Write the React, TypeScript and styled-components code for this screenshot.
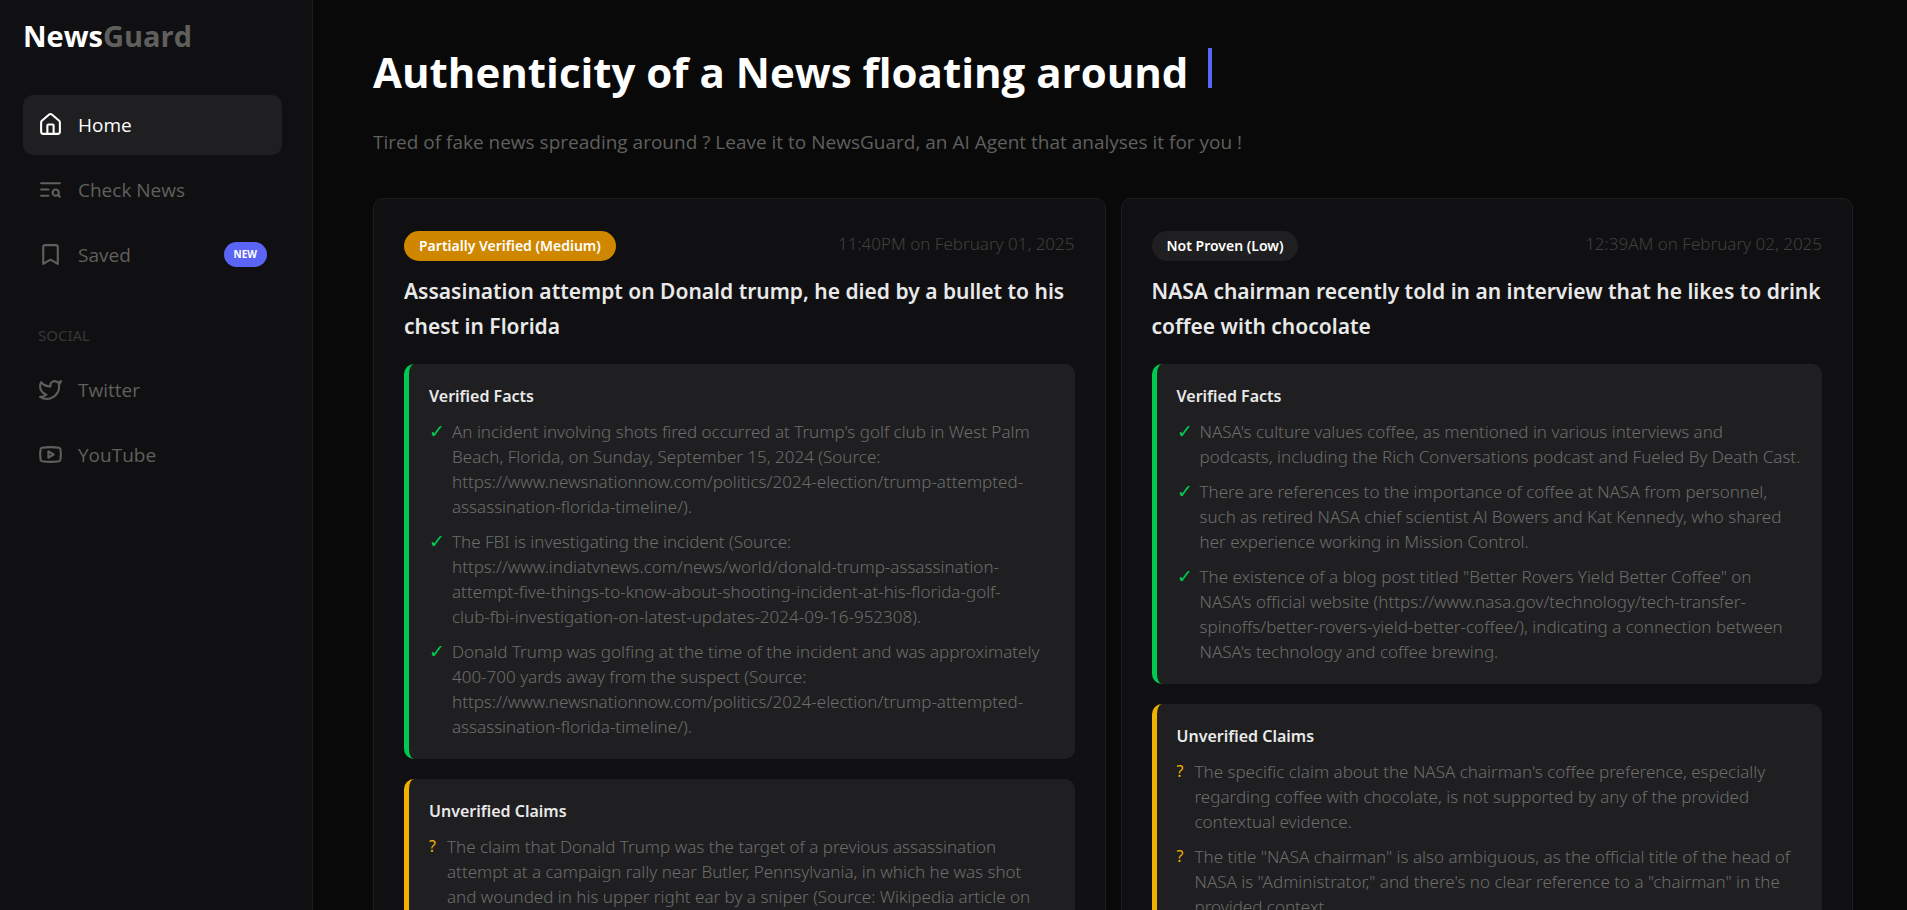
import React, { type ReactNode } from 'react';
import styled, { createGlobalStyle } from 'styled-components';
import { House, Bookmark, Twitter, Youtube } from 'lucide-react';

const color = {
  page: '#090909',
  panel: '#101012',
  raised: '#1f1f21',
  line: '#1d1d20',
  muted: '#5f605d',
  body: '#6c6d6a',
  faint: '#363734',
  stamp: '#3f403d',
  text: '#e9e9e9',
  accent: '#5b65f5',
};

const sans = '"Open Sans", "Noto Sans", sans-serif';
const compact = '"Noto Sans", "Open Sans", sans-serif';

const GlobalStyle = createGlobalStyle`
  * { box-sizing: border-box; margin: 0; padding: 0; }
  body {
    background: ${color.page};
    color: #fff;
    font-family: ${sans};
  }
`;

const Shell = styled.div`
  display: flex;
  height: 100vh;
`;

const Sidebar = styled.aside`
  flex: none;
  width: 313px;
  padding: 16px 30px 0 23px;
  background: ${color.panel};
  border-right: 1px solid ${color.line};
`;

const Logo = styled.h2`
  margin-bottom: 39px;
  font-size: 29px;
  line-height: 40px;
  font-weight: 700;

  span { color: ${color.muted}; }
`;

const NavList = styled.ul`
  display: flex;
  flex-direction: column;
  gap: 5px;
  list-style: none;
`;

const NavLink = styled.a<{ $active?: boolean }>`
  display: flex;
  align-items: center;
  gap: 15px;
  height: 60px;
  padding: 0 15px 2px;
  border-radius: 10px;
  background: ${(p) => (p.$active ? color.raised : 'transparent')};
  color: ${(p) => (p.$active ? '#fff' : color.muted)};
  font-size: 19px;
  line-height: 30px;
  text-decoration: none;
`;

const NavLabel = styled.span`
  padding-top: 2px;
`;

const NewBadge = styled.span`
  margin-left: auto;
  padding: 0 10px;
  border-radius: 13px;
  background: ${color.accent};
  color: #fff;
  font-size: 10px;
  line-height: 25px;
  font-weight: 700;
`;

const GroupTitle = styled.h3`
  margin: 38px 0 12px;
  padding-left: 15px;
  color: ${color.faint};
  font: 400 15px/25px ${compact};
`;

const Main = styled.main`
  flex: 1;
  min-width: 0;
  padding: 46px 54px 30px 60px;
  overflow-y: auto;
  scrollbar-width: none;
`;

const Headline = styled.h1`
  font-size: 42px;
  line-height: 52px;
  font-weight: 700;
`;

const Caret = styled.span`
  display: inline-block;
  width: 4px;
  height: 40px;
  margin-left: 20px;
  background: ${color.accent};
`;

const Tagline = styled.p`
  margin: 29px 0 41px;
  color: ${color.muted};
  font-size: 19px;
  line-height: 30px;
`;

const Feed = styled.div`
  display: grid;
  grid-template-columns: repeat(2, minmax(0, 1fr));
  gap: 15px;
  align-items: start;
`;

const Card = styled.article`
  padding: 32px 30px 30px;
  background: ${color.panel};
  border: 1px solid ${color.line};
  border-radius: 10px;
`;

const CardTop = styled.header`
  display: flex;
  align-items: flex-start;
  justify-content: space-between;
  margin-bottom: 13px;
`;

const Verdict = styled.span<{ $tone: string }>`
  padding: 0 15px;
  border-radius: 15px;
  background: ${(p) => p.$tone};
  font: 600 14px/30px ${compact};
`;

const Stamp = styled.time`
  color: ${color.stamp};
  font: 300 17px/25px ${compact};
`;

const CardTitle = styled.h2`
  margin-bottom: 20px;
  color: ${color.text};
  font: 600 21px/35px ${compact};
`;

const Section = styled.section<{ $edge: string }>`
  padding: 20px;
  border-left: 5px solid ${(p) => p.$edge};
  border-radius: 10px;
  background: ${color.raised};

  & + & { margin-top: 20px; }
`;

const SectionTitle = styled.h3`
  margin-bottom: 10px;
  color: ${color.text};
  font: 600 16px/25px ${compact};
`;

const Points = styled.ul`
  display: flex;
  flex-direction: column;
  gap: 10px;
  list-style: none;
`;

const Point = styled.li`
  display: flex;
  gap: 10px;
  color: ${color.body};
  font: 300 17px/25px ${compact};
  white-space: pre-line;
`;

const Mark = styled.span<{ $tone: string; $wide?: boolean }>`
  flex: none;
  width: ${(p) => (p.$wide ? 13 : 8)}px;
  color: ${(p) => p.$tone};
  font-size: ${(p) => (p.$wide ? 19 : 16)}px;
  font-weight: ${(p) => (p.$wide ? 300 : 400)};
`;

type Kind = 'facts' | 'claims';

const kinds = {
  facts: { title: 'Verified Facts', mark: '✓', tone: '#00c950' },
  claims: { title: 'Unverified Claims', mark: '?', tone: '#f0b100' },
};

interface Story {
  verdict: string;
  tone: string;
  time: string;
  title: string;
  facts: string[];
  claims: string[];
}

const stories: Story[] = [
  {
    verdict: 'Partially Verified (Medium)',
    tone: '#d08700',
    time: '11:40PM on February 01, 2025',
    title: 'Assasination attempt on Donald trump, he died by a bullet to his chest in Florida',
    facts: [
      "An incident involving shots fired occurred at Trump's golf club in West Palm Beach, Florida, on Sunday, September 15, 2024 (Source: https://www.newsnationnow.com/politics/2024-election/trump-attempted-assassination-florida-timeline/).",
      'The FBI is investigating the incident (Source: https://www.indiatvnews.com/news/world/donald-trump-assassination-attempt-five-things-to-know-about-shooting-incident-at-his-florida-golf-\nclub-fbi-investigation-on-latest-updates-2024-09-16-952308).',
      'Donald Trump was golfing at the time of the incident and was approximately 400-700 yards away from the suspect (Source: https://www.newsnationnow.com/politics/2024-election/trump-attempted-assassination-florida-timeline/).',
    ],
    claims: [
      'The claim that Donald Trump was the target of a previous assassination attempt at a campaign rally near Butler, Pennsylvania, in which he was shot and wounded in his upper right ear by a sniper (Source: Wikipedia article on',
    ],
  },
  {
    verdict: 'Not Proven (Low)',
    tone: color.raised,
    time: '12:39AM on February 02, 2025',
    title: 'NASA chairman recently told in an interview that he likes to drink coffee with chocolate',
    facts: [
      "NASA's culture values coffee, as mentioned in various interviews and\npodcasts, including the Rich Conversations podcast and Fueled By Death Cast.",
      'There are references to the importance of coffee at NASA from personnel, such as retired NASA chief scientist Al Bowers and Kat Kennedy, who shared her experience working in Mission Control.',
      'The existence of a blog post titled "Better Rovers Yield Better Coffee" on NASA\'s official website (https://www.nasa.gov/technology/tech-transfer-spinoffs/better-rovers-yield-better-coffee/), indicating a connection between NASA\'s technology and coffee brewing.',
    ],
    claims: [
      "The specific claim about the NASA chairman's coffee preference, especially regarding coffee with chocolate, is not supported by any of the provided contextual evidence.",
      'The title "NASA chairman" is also ambiguous, as the official title of the head of NASA is "Administrator," and there\'s no clear reference to a "chairman" in the provided context.',
    ],
  },
];

function SearchTextIcon() {
  return (
    <svg width="25" height="25" viewBox="0 0 24 24" fill="none" stroke="currentColor" strokeWidth="2" strokeLinecap="round" strokeLinejoin="round" aria-hidden>
      <path d="M21 6H3M10 12H3M10 18H3" />
      <circle cx="17" cy="15" r="3" />
      <path d="m21 19-1.9-1.9" />
    </svg>
  );
}

function NavItem({ icon, label, active, isNew }: { icon: ReactNode; label: string; active?: boolean; isNew?: boolean }) {
  return (
    <li>
      <NavLink href="#" $active={active}>
        {icon}
        <NavLabel>{label}</NavLabel>
        {isNew && <NewBadge>NEW</NewBadge>}
      </NavLink>
    </li>
  );
}

function Findings({ kind, items }: { kind: Kind; items: string[] }) {
  const { title, mark, tone } = kinds[kind];
  return (
    <Section $edge={tone}>
      <SectionTitle>{title}</SectionTitle>
      <Points>
        {items.map((item) => (
          <Point key={item}>
            <Mark $tone={tone} $wide={kind === 'facts'}>{mark}</Mark>
            <span>{item}</span>
          </Point>
        ))}
      </Points>
    </Section>
  );
}

export default function App() {
  return (
    <>
      <GlobalStyle />
      <Shell>
        <Sidebar>
          <Logo>News<span>Guard</span></Logo>
          <nav>
            <NavList>
              <NavItem icon={<House size={25} />} label="Home" active />
              <NavItem icon={<SearchTextIcon />} label="Check News" />
              <NavItem icon={<Bookmark size={25} />} label="Saved" isNew />
            </NavList>
            <GroupTitle>SOCIAL</GroupTitle>
            <NavList>
              <NavItem icon={<Twitter size={25} />} label="Twitter" />
              <NavItem icon={<Youtube size={25} />} label="YouTube" />
            </NavList>
          </nav>
        </Sidebar>
        <Main>
          <Headline>Authenticity of a News floating around<Caret /></Headline>
          <Tagline>Tired of fake news spreading around ? Leave it to NewsGuard, an AI Agent that analyses it for you !</Tagline>
          <Feed>
            {stories.map((story) => (
              <Card key={story.title}>
                <CardTop>
                  <Verdict $tone={story.tone}>{story.verdict}</Verdict>
                  <Stamp>{story.time}</Stamp>
                </CardTop>
                <CardTitle>{story.title}</CardTitle>
                <Findings kind="facts" items={story.facts} />
                <Findings kind="claims" items={story.claims} />
              </Card>
            ))}
          </Feed>
        </Main>
      </Shell>
    </>
  );
}
